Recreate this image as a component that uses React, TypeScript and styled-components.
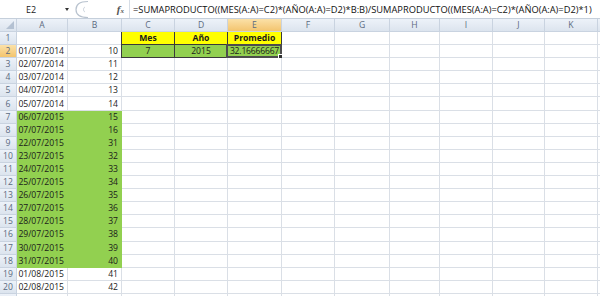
import styled, { createGlobalStyle, css } from 'styled-components';

const GlobalStyle = createGlobalStyle`
  html, body {
    margin: 0;
    padding: 0;
    background: #ffffff;
  }
  body {
    font-family: 'Open Sans', 'Liberation Sans', sans-serif;
  }
`;

const COLS = ['A', 'B', 'C', 'D', 'E', 'F', 'G', 'H', 'I', 'J', 'K', ''];
const WIDTHS = [17, 51, 54, 53, 53, 54, 53, 55, 50, 53, 52, 53, 30];
const ROW_H = 13.1;

type Fill = 'none' | 'green' | 'yellow';

interface ICell {
  text?: string;
  align?: 'left' | 'right' | 'center';
  bold?: boolean;
  fill?: Fill;
  boxed?: boolean;
  selected?: boolean;
}

const GREEN = '#92d050';
const YELLOW = '#ffff00';

const dates = [
  '01/07/2014', '02/07/2014', '03/07/2014', '04/07/2014', '05/07/2014',
  '06/07/2015', '07/07/2015', '22/07/2015', '23/07/2015', '24/07/2015',
  '25/07/2015', '26/07/2015', '27/07/2015', '28/07/2015', '29/07/2015',
  '30/07/2015', '31/07/2015', '01/08/2015', '02/08/2015',
];
const values = [10, 11, 12, 13, 14, 15, 16, 31, 32, 33, 34, 35, 36, 37, 38, 39, 40, 41, 42];

const buildRows = (): ICell[][] => {
  const rows: ICell[][] = [];
  for (let r = 1; r <= 21; r++) {
    const row: ICell[] = COLS.map(() => ({}));
    if (r === 1) {
      row[2] = { text: 'Mes', align: 'center', bold: true, fill: 'yellow', boxed: true };
      row[3] = { text: 'Año', align: 'center', bold: true, fill: 'yellow', boxed: true };
      row[4] = { text: 'Promedio', align: 'center', bold: true, fill: 'yellow', boxed: true };
    } else if (r <= 20) {
      const i = r - 2;
      const fill: Fill = r >= 7 && r <= 18 ? 'green' : 'none';
      row[0] = { text: dates[i], align: 'right', fill };
      row[1] = { text: String(values[i]), align: 'right', fill };
      if (r === 2) {
        row[2] = { text: '7', align: 'center', fill: 'green', boxed: true };
        row[3] = { text: '2015', align: 'center', fill: 'green', boxed: true };
        row[4] = { text: '32.16666667', align: 'center', fill: 'green', boxed: true, selected: true };
      }
    }
    rows.push(row);
  }
  return rows;
};

export default function App() {
  const rows = buildRows();
  return (
    <>
      <GlobalStyle />
      <Window>
        <FormulaBar>
          <NameBox>
            <NameText>E2</NameText>
            <DropArrow />
          </NameBox>
          <Grip>
            <svg width="22" height="19" viewBox="0 0 22 19">
              <path d="M16 1.5 C7 1.5 4 5 4 9.5 C4 14 7 17.5 16 17.5" fill="none" stroke="#b9c3cf" strokeWidth="1.2" />
              <path d="M13 7 C11 8 11 11 13 12" fill="none" stroke="#c8d0da" strokeWidth="1" />
            </svg>
          </Grip>
          <FxBox>
            <Fx>f</Fx>
            <FxSub>x</FxSub>
          </FxBox>
          <Formula>
            =SUMAPRODUCTO((MES(A:A)=C2)*(AÑO(A:A)=D2)*B:B)/SUMAPRODUCTO((MES(A:A)=C2)*(AÑO(A:A)=D2)*1)
          </Formula>
        </FormulaBar>
        <Sheet>
          <Corner>
            <svg width="10" height="10" viewBox="0 0 10 10">
              <polygon points="9,1 9,9 1,9" fill="#b4c1d2" />
            </svg>
          </Corner>
          {COLS.map((c, i) => (
            <ColHeader key={i} $active={c === 'E'}>
              {c}
            </ColHeader>
          ))}
          {rows.map((row, r) => (
            <RowFragment key={r} index={r + 1} cells={row} />
          ))}
        </Sheet>
      </Window>
    </>
  );
}

const RowFragment = ({ index, cells }: { index: number; cells: ICell[] }) => (
  <>
    <RowHeader $active={index === 2}>{index <= 20 ? index : ''}</RowHeader>
    {cells.map((cell, i) => (
      <Cell
        key={i}
        $align={cell.align ?? 'left'}
        $bold={!!cell.bold}
        $fill={cell.fill ?? 'none'}
        $boxed={!!cell.boxed}
        $tight={!!cell.selected}
      >
        {cell.text}
        {cell.selected && (
          <>
            <Selection />
            <FillHandle />
          </>
        )}
      </Cell>
    ))}
  </>
);

const Window = styled.div`
  width: 600px;
  height: 296px;
  overflow: hidden;
  display: flex;
  flex-direction: column;
  background: #ffffff;
`;

const FormulaBar = styled.div`
  display: flex;
  align-items: center;
  height: 19px;
  flex-shrink: 0;
  background: #ffffff;
  border-bottom: 1px solid #c5cfdb;
  box-sizing: border-box;
`;

const NameBox = styled.div`
  display: flex;
  align-items: center;
  flex-shrink: 0;
  width: 72px;
  height: 100%;
`;

const NameText = styled.div`
  width: 62px;
  text-align: center;
  font-size: 9px;
  color: #222;
`;

const DropArrow = styled.div`
  width: 0;
  height: 0;
  margin-left: 3px;
  border-left: 2.5px solid transparent;
  border-right: 2.5px solid transparent;
  border-top: 3px solid #333;
`;

const Grip = styled.div`
  display: flex;
  flex-shrink: 0;
  width: 22px;
  height: 100%;
`;

const FxBox = styled.div`
  display: flex;
  flex-shrink: 0;
  align-items: baseline;
  justify-content: flex-end;
  width: 36px;
  padding-right: 5px;
  box-sizing: border-box;
  color: #555;
  font-family: 'Liberation Serif', serif;
  font-style: italic;
  border-right: 1px solid #d6dde6;
  height: 100%;
  padding-top: 3px;
`;

const Fx = styled.span`
  font-size: 11px;
  font-weight: bold;
`;

const FxSub = styled.span`
  font-size: 7px;
  font-weight: bold;
`;

const Formula = styled.div`
  padding-left: 3px;
  font-size: 9.3px;
  color: #111;
  white-space: nowrap;
`;

const Sheet = styled.div`
  display: grid;
  grid-template-columns: ${WIDTHS.map((w) => `${w}px`).join(' ')};
  grid-template-rows: 13px repeat(21, ${ROW_H}px);
  font-size: 8.6px;
`;

const headerBase = css<{ $active: boolean }>`
  display: flex;
  align-items: center;
  box-sizing: border-box;
  color: #5b6a80;
  border-right: 1px solid #c9d3e0;
  border-bottom: 1px solid #c9d3e0;
  background: ${(p) =>
    p.$active
      ? 'linear-gradient(#fbe1a8, #f3c46e)'
      : 'linear-gradient(#edf2f9, #dce4ee)'};
`;

const Corner = styled.div`
  display: flex;
  align-items: flex-end;
  justify-content: flex-end;
  box-sizing: border-box;
  border-right: 1px solid #c9d3e0;
  border-bottom: 1px solid #c9d3e0;
  background: linear-gradient(#edf2f9, #dce4ee);
  padding: 0 1px 1px 0;
`;

const ColHeader = styled.div<{ $active: boolean }>`
  ${headerBase}
  justify-content: center;
`;

const RowHeader = styled.div<{ $active: boolean }>`
  ${headerBase}
  justify-content: center;
`;

const fillColor = (f: Fill) => (f === 'green' ? GREEN : f === 'yellow' ? YELLOW : '#ffffff');

const Cell = styled.div<{ $align: string; $bold: boolean; $fill: Fill; $boxed: boolean; $tight: boolean }>`
  position: relative;
  display: flex;
  align-items: center;
  justify-content: ${(p) =>
    p.$align === 'right' ? 'flex-end' : p.$align === 'center' ? 'center' : 'flex-start'};
  padding: 0 ${(p) => (p.$tight ? 0 : 3)}px;
  box-sizing: border-box;
  white-space: nowrap;
  color: #1a1a1a;
  letter-spacing: ${(p) => (p.$tight ? '-0.2px' : '0')};
  font-weight: ${(p) => (p.$bold ? 700 : 400)};
  background: ${(p) => fillColor(p.$fill)};
  border-right: 1px solid ${(p) => (p.$boxed ? '#3a3a3a' : p.$fill === 'none' ? '#dadfe6' : fillColor(p.$fill))};
  border-bottom: 1px solid ${(p) => (p.$boxed ? '#3a3a3a' : p.$fill === 'none' ? '#dadfe6' : fillColor(p.$fill))};
  ${(p) =>
    p.$boxed &&
    css`
      box-shadow: -1px 0 0 #3a3a3a;
    `}
`;

const Selection = styled.div`
  position: absolute;
  left: -2px;
  top: -1px;
  right: -1px;
  bottom: -1px;
  border: 2px solid #4d4d4d;
  pointer-events: none;
`;

const FillHandle = styled.div`
  position: absolute;
  right: -3px;
  bottom: -3px;
  width: 4px;
  height: 4px;
  background: #333;
  border: 1px solid #fff;
`;
